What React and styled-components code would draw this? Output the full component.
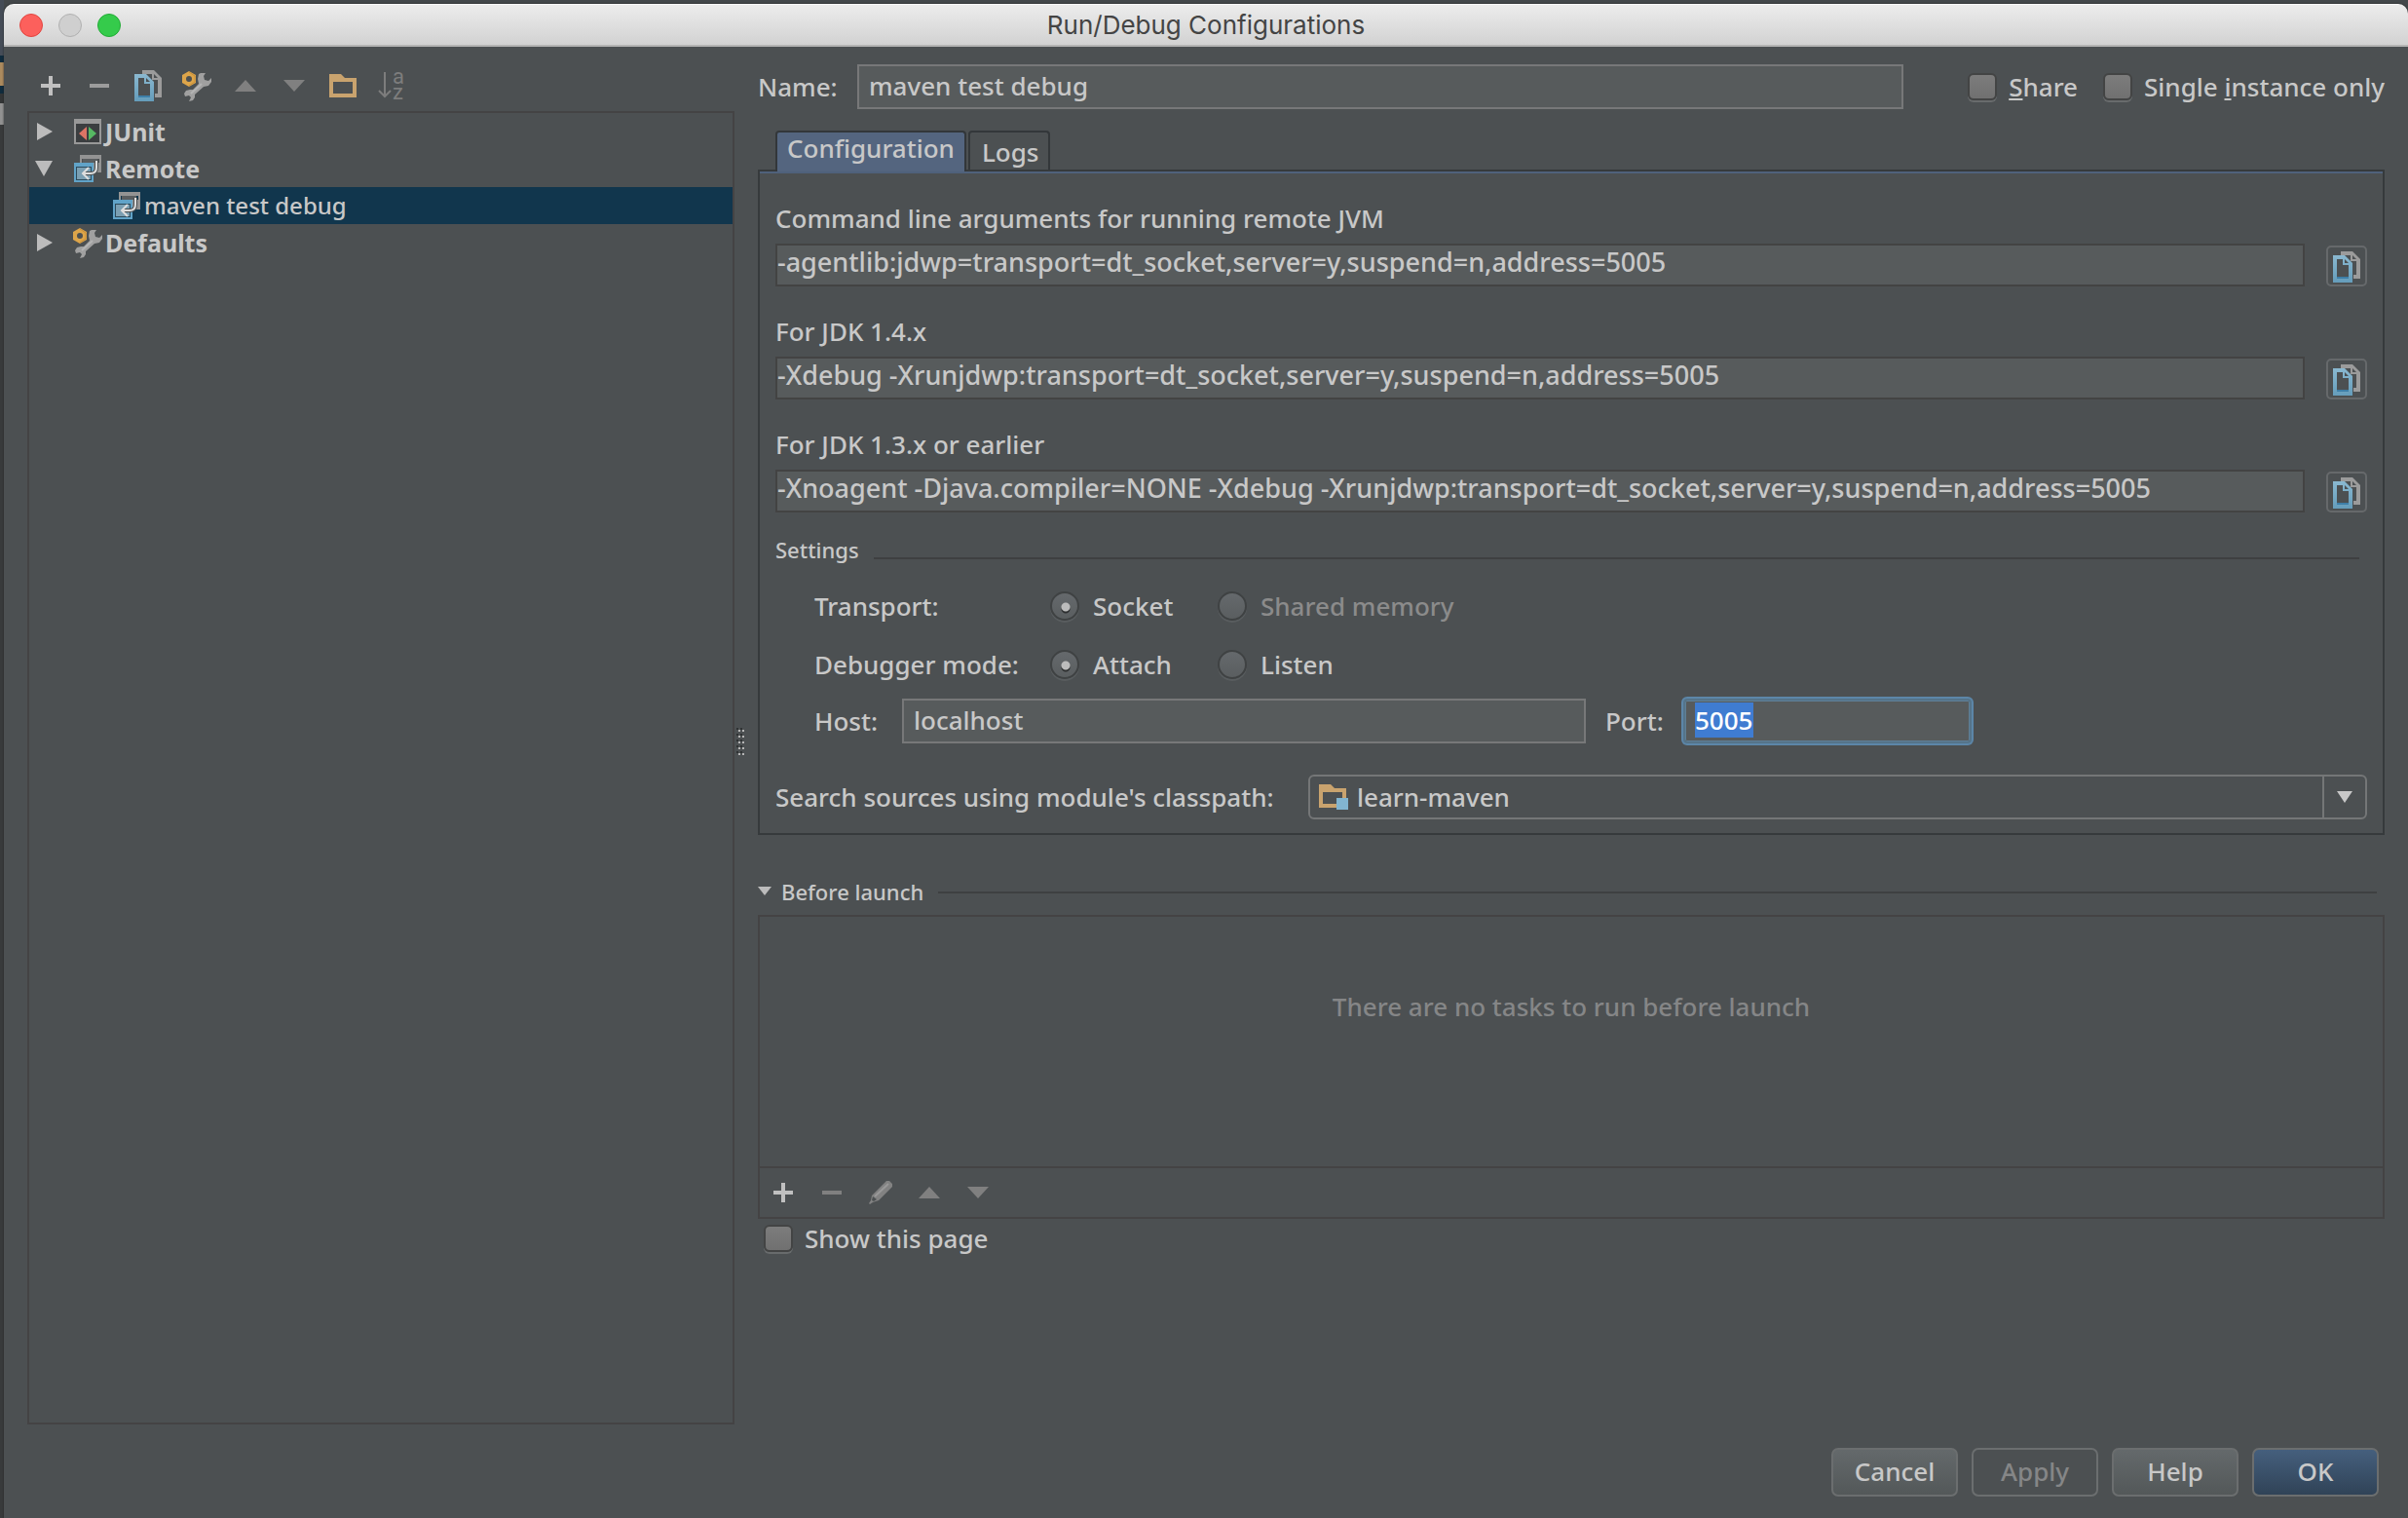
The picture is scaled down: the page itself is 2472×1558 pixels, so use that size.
import React, { useEffect, useRef } from 'react';
import styled, { createGlobalStyle } from 'styled-components';

const GlobalStyle = createGlobalStyle`
  * {
    box-sizing: border-box;
  }

  body {
    margin: 0;
    background: #3a3c3e;
    color: #c8c8c8;
    font-family: 'Noto Sans', 'Open Sans', sans-serif;
    font-size: 26px;
    font-weight: 500;
    line-height: 36px;
  }

  button, input, select {
    font: inherit;
    color: inherit;
  }
`;

// sliver of the editor that shows behind the dialog
const Desktop = styled.div`
  min-height: 100vh;
  padding: 4px 0 0 4px;
  display: flex;
  background:
    linear-gradient(#454c57 0 57px, #0f2b3d 57px 64px, #ab8a5e 64px 88px, #0f2b3d 88px 96px, #333536 96px 106px, #919191 106px 128px, #383a3b 128px) 0 0 / 4px 100% no-repeat,
    #43474a;
`;

const Window = styled.div`
  flex: 1;
  display: flex;
  flex-direction: column;
  background: #4c5052;
  border-radius: 10px 10px 0 0;
  box-shadow: 0 0 2px #222;
  overflow: hidden;
`;

const TitleBar = styled.header`
  display: grid;
  grid-template-columns: 1fr auto 1fr;
  align-items: center;
  height: 44px;
  padding: 0 16px;
  background: linear-gradient(#ececec, #d2d2d2);
  border-top: 1px solid #f8f8f8;
  border-bottom: 2px solid #b4b4b4;
`;

const Title = styled.h1`
  margin: 0;
  font-family: Inter, sans-serif;
  font-size: 26px;
  font-weight: 400;
  color: #444;
`;

const Lights = styled.div`
  display: flex;
  gap: 16px;
`;

const Light = styled.button`
  width: 24px;
  height: 24px;
  padding: 0;
  border: 1px solid ${props => props.$edge};
  border-radius: 50%;
  background: ${props => props.$fill};
`;

const Body = styled.div`
  flex: 1;
  display: flex;
`;

const Sidebar = styled.aside`
  width: 750px;
  padding-left: 24px;
  display: flex;
  flex-direction: column;
`;

const Toolbar = styled.div`
  display: flex;
  align-items: center;
  height: ${props => props.$tall ? '66px' : '50px'};
  padding-top: ${props => props.$tall ? '14px' : '0'};
`;

const ToolButton = styled.button`
  width: 50px;
  height: 40px;
  padding: 0 2px 0 0;
  border: none;
  background: none;
  display: flex;
  align-items: center;
  justify-content: center;
`;

const Tree = styled.ul`
  flex: 1;
  margin: 0;
  padding: 0;
  list-style: none;
  border: 2px solid #444344;
`;

const TreeRow = styled.li`
  display: flex;
  align-items: center;
  gap: 2px;
  height: 38px;
  padding-left: ${props => props.$child ? '84px' : '6px'};
  font-size: ${props => props.$child ? '24px' : '25px'};
  font-weight: ${props => props.$child ? '500' : '700'};
  background: ${props => props.$selected ? '#11364d' : 'transparent'};
`;

const Twisty = styled.button`
  width: 20px;
  height: 20px;
  margin-right: 16px;
  padding: 0;
  border: none;
  background: none;
  display: flex;
`;

const Splitter = styled.div`
  width: 24px;
  display: flex;
  align-items: center;
  padding: 16px 0 0 2px;
`;

const Main = styled.main`
  flex: 1;
  padding: 18px 24px 0 0;
`;

const NameRow = styled.div`
  display: flex;
  align-items: center;
  height: 46px;
`;

const NameLabel = styled.label`
  width: 102px;
`;

const TextInput = styled.input`
  flex: ${props => props.$grow ? '1' : 'none'};
  min-width: 0;
  height: 46px;
  padding: 0 10px 2px;
  background: #575b5c;
  border: 2px solid #777879;
  border-radius: 0;
  outline: none;
`;

const HostInput = styled(TextInput)`
  width: 702px;
`;

const PortInput = styled(TextInput)`
  width: 296px;

  &:focus {
    border: 2px solid #55748a;
    border-radius: 4px;
    box-shadow: 0 0 0 2px #5c86a8, inset 0 0 0 1px #5f7f96;
  }

  &::selection {
    background: #3f7cd1;
    color: #fff;
  }
`;

const CheckLabel = styled.label`
  display: flex;
  align-items: center;
  gap: 12px;
  white-space: nowrap;
`;

const Checks = styled.div`
  display: flex;
  gap: 26px;
  margin-left: 66px;
`;

const Checkbox = styled.input`
  appearance: none;
  width: 30px;
  height: 28px;
  margin: 0;
  background: linear-gradient(#7c7c7c, #707070);
  border: 2px solid #434444;
  border-radius: 6px;
  box-shadow: 0 2px 0 #686b6c;
`;

const Tabs = styled.div`
  display: flex;
  gap: 2px;
  height: 40px;
  margin: 22px 0 0 18px;
`;

const Tab = styled.button`
  height: ${props => props.$active ? '42px' : '40px'};
  padding: ${props => props.$active ? '0 10px 8px' : '2px 10px 0 12px'};
  line-height: 32px;
  border: 2px solid #33373a;
  border-bottom: none;
  border-radius: 4px 4px 0 0;
  background: ${props => props.$active ? '#54657f' : 'transparent'};
  position: relative;
`;

const TabPanel = styled.section`
  border: 2px solid #363a3c;
  padding: 0 16px 14px;
  box-shadow: inset 0 2px 0 #4f617b;
`;

const Field = styled.div`
  display: flex;
  flex-direction: column;
  height: 116px;
  padding-top: 30px;
`;

const FieldLine = styled.div`
  display: flex;
  align-items: flex-end;
  gap: 22px;
  margin-top: 8px;
`;

const ReadOnly = styled.input`
  flex: 1;
  min-width: 0;
  height: 44px;
  padding: 0 0 8px;
  font-size: 27px;
  background: #575b5c;
  border: 2px solid #434343;
  outline: none;
`;

const CopyButton = styled.button`
  width: 42px;
  height: 42px;
  padding: 2px 0 0;
  border: 2px solid #66696b;
  border-radius: 5px;
  background: none;
  display: flex;
  align-items: center;
  justify-content: center;
`;

const SectionTitle = styled.h2`
  display: flex;
  align-items: center;
  gap: 15px;
  margin: 0;
  font-size: 22px;
  font-weight: 500;
  line-height: 32px;

  &::after {
    content: '';
    flex: 1;
    height: 2px;
    margin-top: ${props => props.$low ? '18px' : '2px'};
    background: #3e4041;
  }
`;

const SettingsTitle = styled(SectionTitle)`
  margin: 24px 8px 0 0;
`;

const LaunchTitle = styled(SectionTitle)`
  margin: 42px 8px 0 0;
`;

const Fold = styled.button`
  padding: 0;
  border: none;
  background: none;
  display: flex;
  align-items: center;
  gap: 10px;
`;

const Settings = styled.div`
  padding: 12px 0 0 40px;
`;

const RadioRow = styled.div`
  display: grid;
  grid-template-columns: 242px 172px auto;
  align-items: center;
  justify-content: start;
  height: 60px;
`;

const RadioLabel = styled.label`
  display: flex;
  align-items: center;
  gap: 14px;
  color: ${props => props.$off ? '#8b8b8b' : 'inherit'};
`;

const Radio = styled.input`
  appearance: none;
  width: 30px;
  height: 30px;
  margin: 0;
  border: 2px solid #3f4243;
  border-radius: 50%;
  box-shadow: 0 2px 0 #595d5f;
  background: linear-gradient(#65696c, #5a5e60);

  &:checked {
    background:
      radial-gradient(circle at 14px 14px, #bcbcbc 0 4px, transparent 5px),
      radial-gradient(circle at 14px 16px, #2d2f30 0 4px, transparent 5px),
      linear-gradient(#65696c, #5a5e60);
  }
`;

const HostRow = styled.div`
  display: flex;
  align-items: center;
  padding-top: 5px;
`;

const HostLabel = styled.label`
  width: 90px;
`;

const PortLabel = styled.label`
  width: 100px;
  padding-left: 20px;
`;

const ModuleRow = styled.div`
  display: flex;
  align-items: center;
  gap: 20px;
  margin-top: 32px;
`;

const ModuleLabel = styled.label`
  width: 527px;
  white-space: nowrap;
`;

const SelectBox = styled.div`
  flex: 1;
  display: flex;
  align-items: center;
  height: 46px;
  padding-left: 9px;
  border: 2px solid #747677;
  border-radius: 6px;
`;

const Select = styled.select`
  flex: 1;
  height: 42px;
  padding: 0 0 0 9px;
  appearance: none;
  border: none;
  outline: none;
  background: transparent;
`;

const SelectArrow = styled.span`
  width: 44px;
  height: 42px;
  border-left: 2px solid #747677;
  display: flex;
  align-items: center;
  justify-content: center;
`;

const LaunchBox = styled.section`
  margin-top: 8px;
  border: 2px solid #444344;
`;

const EmptyTasks = styled.p`
  height: 256px;
  margin: 0;
  padding-top: 74px;
  text-align: center;
  color: #858687;
`;

const LaunchTools = styled(Toolbar)`
  border-top: 2px solid #444344;
  height: 52px;
`;

const ShowPage = styled.div`
  display: flex;
  padding: 2px 0 0 6px;
`;

const Footer = styled.footer`
  display: flex;
  justify-content: flex-end;
  gap: 14px;
  padding: 24px 30px 22px;
`;

const Button = styled.button`
  width: 130px;
  height: 50px;
  padding: 0 0 2px;
  border: 2px solid #6b6e6f;
  border-radius: 7px;
  background: ${props => props.$primary
    ? 'linear-gradient(#455f7d, #304357)'
    : 'linear-gradient(#64696b, #535859)'};

  &:disabled {
    background: none;
    color: #858687;
  }
`;

const PlusIcon = () => (
  <svg width="20" height="20"><path d="M8 0h4v8h8v4h-8v8H8v-8H0V8h8z" fill="#c0c0c0" /></svg>
);

const MinusIcon = ({ color = '#9c9c9c' }) => (
  <svg width="20" height="20"><path d="M0 8h20v4H0z" fill={color} /></svg>
);

const UpIcon = () => (
  <svg width="22" height="12"><path d="M11 0l11 12H0z" fill="#808080" /></svg>
);

const DownIcon = () => (
  <svg width="22" height="12"><path d="M0 0h22L11 12z" fill="#808080" /></svg>
);

const CopyIcon = () => (
  <svg width="28" height="32">
    <defs>
      <linearGradient id="page" x1="0" y1="0" x2="0" y2="1">
        <stop offset="0" stopColor="#8ab8d0" />
        <stop offset="1" stopColor="#659dbb" />
      </linearGradient>
    </defs>
    <path d="M8 0h12l8 8v20h-7v-4h3V10h-6V4H8z" fill="#9b9b9b" />
    <path d="M20 4l4 4h-4z" fill="#4c5052" />
    <path fillRule="evenodd" d="M0 4h12l8 8v20H0zM4 8v20h12V14h-6V8z" fill="url(#page)" />
    <path d="M12 8l4 4h-4z" fill="#4c5052" />
    <path d="M4 26h12v2H4z" fill="#3e7fa8" />
  </svg>
);

const WrenchIcon = () => (
  <svg width="32" height="32" viewBox="0 0 32 32">
    <path d="M18 4l2-1h5l-2 3 1 4 4 1 3-3v4l-3 4-5 1-9 8v3l-2 3-4 1 2-4-2-2-4 1-1-3 2-3 4-1h3l6-6-1-5z" fill="#a0a0a0" />
    <path d="M10 24l11-10" stroke="#b4b4b4" strokeWidth="2" fill="none" />
    <path fillRule="evenodd" d="M8 1l7 4v8l-7 4-7-4V5zM8 6a3 3 0 1 0 0 6a3 3 0 1 0 0-6z" fill="#dda54a" />
    <path d="M8 2l6 4v6l-6 4" stroke="#c98f38" fill="none" />
  </svg>
);

const FolderIcon = () => (
  <svg width="28" height="24">
    <path fillRule="evenodd" d="M0 0h12l4 4h12v20H0zM4 8v12h20V8z" fill="#c9a36e" />
  </svg>
);

const ModuleIcon = () => (
  <svg width="30" height="26">
    <path fillRule="evenodd" d="M0 0h12l4 4h12v20H0zM4 8v12h20V8z" fill="#c9a36e" />
    <path d="M18 14h12v12H18z" fill="#82b5d0" />
  </svg>
);

const SortIcon = () => (
  <svg width="28" height="32" fill="none" overflow="visible">
    <path d="M7 2v25M1 21l6 6 6-6" stroke="#7d7d7d" strokeWidth="2" />
    <text x="15" y="14" fontFamily="Roboto" fontWeight="400" fontSize="22" fill="#7d7d7d">a</text>
    <text x="15" y="30" fontFamily="Roboto" fontWeight="400" fontSize="22" fill="#7d7d7d">z</text>
  </svg>
);

const PencilIcon = () => (
  <svg width="24" height="24">
    <path d="M18 0h3l3 3v3L10 20l-6 2-3 2-1-1 2-3 1-5z" fill="#828282" />
    <path d="M6 16l14-13" stroke="#999" strokeWidth="2" />
    <path d="M4 16l-1 4 2 1 3-2z" fill="#4c5052" />
  </svg>
);

const JUnitIcon = () => (
  <svg width="32" height="28">
    <path d="M2 1h28v26H2z" fill="#989898" />
    <path d="M4 6h24v19H4z" fill="#3b3e40" />
    <path d="M15 9v14l-8-7z" fill="#dd7565" />
    <path d="M17 9v14l8-7z" fill="#56b862" />
  </svg>
);

const RemoteIcon = () => (
  <svg width="32" height="28">
    <path fillRule="evenodd" d="M8 0h22v18h-8V8H8zM10 4v4h18V4z" fill="#939393" />
    <path d="M11 4h15v4H11z" fill="#5a5e60" />
    <path d="M2 8h20v20H2z" fill="#61a3c8" />
    <path d="M4 12h16v14H4z" fill="#2c4a5b" />
    <path d="M5 13h14v12H5z" fill="#7b9fb2" />
    <path d="M25 6v7c0 4-2 6-6 6h-7" fill="none" stroke="#4c5052" strokeWidth="4" />
    <path d="M25 6v7c0 4-2 6-6 6h-7M17 13l-6 6 6 6" fill="none" stroke="#dedede" strokeWidth="2" />
  </svg>
);

const Twist = ({ open }) => (
  <svg width="20" height="20">
    <path d={open ? 'M0 2h18L9 18z' : 'M2 1v18l16-9z'} fill="#bcbcbc" />
  </svg>
);

const GripIcon = () => (
  <svg width="8" height="32">
    {[0, 6, 12, 18, 24].map(y => (
      <g key={y}>
        <path d={`M0 ${y}h2v2h-2zM4 ${y}h2v2h-2z`} fill="#2f3233" />
        <path d={`M2 ${y + 2}h2v2h-2zM6 ${y + 2}h2v2h-2z`} fill="#b5b5b5" />
      </g>
    ))}
  </svg>
);

const commands = [
  { id: 'jvm', label: 'Command line arguments for running remote JVM', value: '-agentlib:jdwp=transport=dt_socket,server=y,suspend=n,address=5005' },
  { id: 'jdk14', label: 'For JDK 1.4.x', value: '-Xdebug -Xrunjdwp:transport=dt_socket,server=y,suspend=n,address=5005' },
  { id: 'jdk13', label: 'For JDK 1.3.x or earlier', value: '-Xnoagent -Djava.compiler=NONE -Xdebug -Xrunjdwp:transport=dt_socket,server=y,suspend=n,address=5005' },
];

const ConfigTree = () => (
  <Sidebar>
    <Toolbar $tall>
      <ToolButton aria-label="Add"><PlusIcon /></ToolButton>
      <ToolButton aria-label="Remove"><MinusIcon /></ToolButton>
      <ToolButton aria-label="Copy"><CopyIcon /></ToolButton>
      <ToolButton aria-label="Edit defaults"><WrenchIcon /></ToolButton>
      <ToolButton aria-label="Move up"><UpIcon /></ToolButton>
      <ToolButton aria-label="Move down"><DownIcon /></ToolButton>
      <ToolButton aria-label="New folder"><FolderIcon /></ToolButton>
      <ToolButton aria-label="Sort"><SortIcon /></ToolButton>
    </Toolbar>
    <Tree>
      <TreeRow><Twisty aria-label="Expand"><Twist /></Twisty><JUnitIcon />JUnit</TreeRow>
      <TreeRow><Twisty aria-label="Collapse"><Twist open /></Twisty><RemoteIcon />Remote</TreeRow>
      <TreeRow $child $selected><RemoteIcon />maven test debug</TreeRow>
      <TreeRow><Twisty aria-label="Expand"><Twist /></Twisty><WrenchIcon />Defaults</TreeRow>
    </Tree>
  </Sidebar>
);

const Configuration = () => {
  const port = useRef(null);

  useEffect(() => {
    port.current.focus();
    port.current.select();
  }, []);

  return (
    <TabPanel>
      {commands.map(({ id, label, value }) => (
        <Field key={id}>
          <label htmlFor={id}>{label}</label>
          <FieldLine>
            <ReadOnly id={id} value={value} readOnly />
            <CopyButton aria-label="Copy to clipboard"><CopyIcon /></CopyButton>
          </FieldLine>
        </Field>
      ))}
      <SettingsTitle $low>Settings</SettingsTitle>
      <Settings>
        <RadioRow role="radiogroup" aria-label="Transport">
          <span>Transport:</span>
          <RadioLabel><Radio type="radio" name="transport" defaultChecked />Socket</RadioLabel>
          <RadioLabel $off><Radio type="radio" name="transport" disabled />Shared memory</RadioLabel>
        </RadioRow>
        <RadioRow role="radiogroup" aria-label="Debugger mode">
          <span>Debugger mode:</span>
          <RadioLabel><Radio type="radio" name="mode" defaultChecked />Attach</RadioLabel>
          <RadioLabel><Radio type="radio" name="mode" />Listen</RadioLabel>
        </RadioRow>
        <HostRow>
          <HostLabel htmlFor="host">Host:</HostLabel>
          <HostInput id="host" defaultValue="localhost" />
          <PortLabel htmlFor="port">Port:</PortLabel>
          <PortInput id="port" ref={port} defaultValue="5005" />
        </HostRow>
      </Settings>
      <ModuleRow>
        <ModuleLabel htmlFor="module">Search sources using module's classpath:</ModuleLabel>
        <SelectBox>
          <ModuleIcon />
          <Select id="module"><option>learn-maven</option></Select>
          <SelectArrow><svg width="16" height="12"><path d="M0 0h16L8 12z" fill="#c8c8c8" /></svg></SelectArrow>
        </SelectBox>
      </ModuleRow>
    </TabPanel>
  );
};

const BeforeLaunch = () => (
  <>
    <LaunchTitle>
      <Fold>
        <svg width="14" height="10"><path d="M0 0h14L7 9z" fill="#bcbcbc" /></svg>
        Before launch
      </Fold>
    </LaunchTitle>
    <LaunchBox>
      <EmptyTasks>There are no tasks to run before launch</EmptyTasks>
      <LaunchTools>
        <ToolButton aria-label="Add task"><PlusIcon /></ToolButton>
        <ToolButton aria-label="Remove task"><MinusIcon color="#808080" /></ToolButton>
        <ToolButton aria-label="Edit task"><PencilIcon /></ToolButton>
        <ToolButton aria-label="Move task up"><UpIcon /></ToolButton>
        <ToolButton aria-label="Move task down"><DownIcon /></ToolButton>
      </LaunchTools>
    </LaunchBox>
    <ShowPage>
      <CheckLabel><Checkbox type="checkbox" />Show this page</CheckLabel>
    </ShowPage>
  </>
);

const App = () => {
  return (
    <Desktop>
      <GlobalStyle />
      <Window>
        <TitleBar>
          <Lights>
            <Light aria-label="Close" $fill="#fc605c" $edge="#e0443f" />
            <Light aria-label="Minimize" $fill="#cfcfcf" $edge="#b0b0b0" />
            <Light aria-label="Zoom" $fill="#35cb4b" $edge="#22ab36" />
          </Lights>
          <Title>Run/Debug Configurations</Title>
        </TitleBar>
        <Body>
          <ConfigTree />
          <Splitter><GripIcon /></Splitter>
          <Main>
            <NameRow>
              <NameLabel htmlFor="name">Name:</NameLabel>
              <TextInput id="name" $grow defaultValue="maven test debug" />
              <Checks>
                <CheckLabel><Checkbox type="checkbox" /><span><u>S</u>hare</span></CheckLabel>
                <CheckLabel><Checkbox type="checkbox" /><span>Single <u>i</u>nstance only</span></CheckLabel>
              </Checks>
            </NameRow>
            <Tabs role="tablist">
              <Tab role="tab" aria-selected="true" $active>Configuration</Tab>
              <Tab role="tab" aria-selected="false">Logs</Tab>
            </Tabs>
            <Configuration />
            <BeforeLaunch />
          </Main>
        </Body>
        <Footer>
          <Button>Cancel</Button>
          <Button disabled>Apply</Button>
          <Button>Help</Button>
          <Button $primary>OK</Button>
        </Footer>
      </Window>
    </Desktop>
  );
};

export default App;
